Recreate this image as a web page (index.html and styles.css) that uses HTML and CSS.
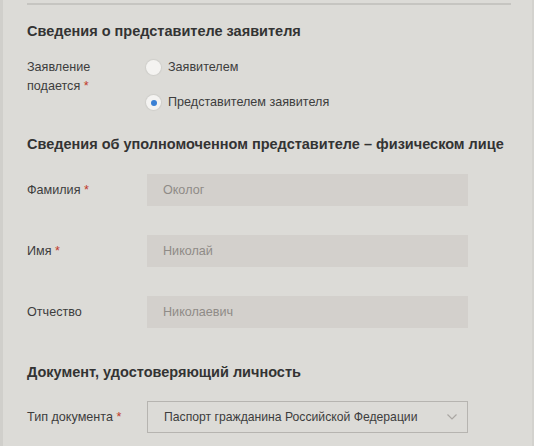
FILE: index.html
```html
<!DOCTYPE html>
<html lang="ru">
<head>
<meta charset="utf-8">
<title>Сведения о представителе</title>
<link rel="stylesheet" href="styles.css">
</head>
<body>
<div class="page">
  <div class="edge"></div>
  <main class="panel">
    <div class="divider"></div>

    <h2 class="section-title first">Сведения о представителе заявителя</h2>
    <div class="row row-radio">
      <div class="label">Заявление<br>подается <span class="req">*</span></div>
      <div class="radios">
        <label class="radio"><span class="circle"></span><span class="radio-text">Заявителем</span></label>
        <label class="radio"><span class="circle checked"></span><span class="radio-text">Представителем заявителя</span></label>
      </div>
    </div>

    <h2 class="section-title second">Сведения об уполномоченном представителе – физическом лице</h2>
    <div class="fields">
      <div class="row">
        <div class="label">Фамилия <span class="req">*</span></div>
        <div class="input">Окoлог</div>
      </div>
      <div class="row">
        <div class="label">Имя <span class="req">*</span></div>
        <div class="input">Николай</div>
      </div>
      <div class="row">
        <div class="label">Отчество</div>
        <div class="input">Николаевич</div>
      </div>
    </div>

    <h2 class="section-title third">Документ, удостоверяющий личность</h2>
    <div class="row row-select">
      <div class="label">Тип документа <span class="req">*</span></div>
      <div class="select">
        <span class="select-text">Паспорт гражданина Российской Федерации</span>
        <svg class="chevron" width="10" height="6" viewBox="0 0 10 6"><path d="M0.5 0.5 L5 5 L9.5 0.5" fill="none" stroke="#aaa7a3" stroke-width="1.2"/></svg>
      </div>
    </div>
  </main>
  <div class="edge-right"></div>
</div>
</body>
</html>
```

FILE: styles.css
```css
html, body {
  margin: 0;
  padding: 0;
  background: #dcdbd7;
}
body {
  font-family: "Liberation Sans", Arial, sans-serif;
  font-size: 12.6px;
  color: #3d3d3d;
}
.page {
  display: flex;
  width: 534px;
  height: 446px;
  overflow: hidden;
}
.edge {
  width: 3px;
  background: #d0cfcb;
  flex: none;
}
.edge-right {
  width: 2px;
  background: #d3d2ce;
  flex: none;
}
.panel {
  flex: 1;
  padding: 0 21px 0 24px;
  background: #dcdbd7;
}
.divider {
  margin-top: 3px;
  height: 2px;
  background: #c6c5c1;
}
.section-title {
  margin: 0;
  font-size: 14.5px;
  line-height: 20px;
  font-weight: bold;
  color: #333333;
  white-space: nowrap;
}
.section-title.first { margin-top: 16px; }
.section-title.second { margin-top: 22px; }
.section-title.third { margin-top: 34px; }
.row {
  display: flex;
  align-items: center;
}
.row-radio {
  align-items: flex-start;
  margin-top: 17px;
}
.label {
  width: 120px;
  flex: none;
  line-height: 19px;
  color: #3d3d3d;
}
.req {
  color: #c0392b;
}
.radios {
  display: flex;
  flex-direction: column;
  gap: 16px;
  margin-left: -1px;
}
.radio {
  display: flex;
  align-items: center;
  line-height: 19px;
  color: #3d3d3d;
}
.circle {
  width: 15px;
  height: 15px;
  border-radius: 50%;
  background: #f4f3f1;
  box-shadow: 0 0 1px 1px rgba(0,0,0,0.06);
  position: relative;
  flex: none;
  margin-right: 7px;
}
.circle.checked::after {
  content: "";
  position: absolute;
  left: 4.5px;
  top: 4.5px;
  width: 6px;
  height: 6px;
  border-radius: 50%;
  background: #3a80d4;
}
.fields {
  margin-top: 20px;
  display: flex;
  flex-direction: column;
  gap: 29px;
}
.input {
  width: 321px;
  height: 32px;
  box-sizing: border-box;
  padding: 0 16px;
  display: flex;
  align-items: center;
  background: #d3d0cc;
  color: #8f8b87;
}
.row-select {
  margin-top: 19px;
}
.select {
  width: 321px;
  height: 32px;
  box-sizing: border-box;
  border: 1px solid #b6b4b0;
  padding: 0 10px 0 16px;
  display: flex;
  align-items: center;
  justify-content: space-between;
  color: #3d3d3d;
  white-space: nowrap;
}
.select-text {
  font-size: 12.2px;
}
.chevron {
  display: block;
}
```
